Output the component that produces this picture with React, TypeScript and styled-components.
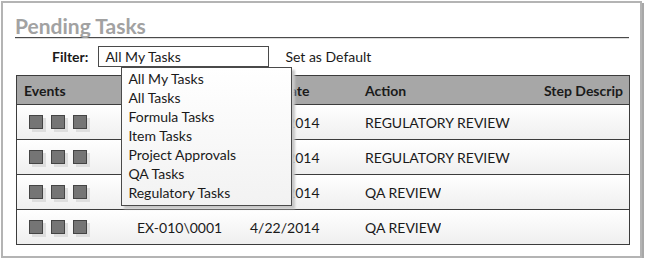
import styled, { createGlobalStyle } from "styled-components"

const GlobalStyle = createGlobalStyle`
    body {
        margin: 0;
        background: #ffffff;
        font-family: Lato, "Open Sans", sans-serif;
        color: #1a1a1a;
    }
`

const Frame = styled.div`
    box-sizing: border-box;
    position: relative;
    margin: 1px 0 0 1px;
    width: 641px;
    height: 257px;
    border: 2px solid #b4b4b4;
    box-shadow: 2px 2px 0 #a8a8a8;
    padding: 12px 11px 0 12px;
    background: #ffffff;
`

const Title = styled.h1`
    margin: 0;
    font-size: 21px;
    line-height: 21px;
    font-weight: 700;
    color: #a2a2a2;
    border-bottom: 1px solid #4a4a4a;
    box-shadow: 0 1px 0 #dcdcdc;
    padding-bottom: 1px;
`

const FilterRow = styled.div`
    display: flex;
    align-items: center;
    margin-top: 8px;
    padding-left: 37px;
    font-size: 14px;
`

const FilterLabel = styled.span`
    font-weight: 700;
`

const SelectWrap = styled.div`
    position: relative;
    margin-left: 10px;
`

const SelectBox = styled.div`
    box-sizing: border-box;
    width: 171px;
    height: 21px;
    border: 1px solid #4a4a4a;
    padding-left: 6px;
    line-height: 19px;
    background: #ffffff;
`

const DefaultLink = styled.span`
    margin-left: 16px;
`

const Dropdown = styled.div`
    position: absolute;
    z-index: 2;
    left: 23px;
    top: 21px;
    box-sizing: border-box;
    width: 171px;
    height: 139px;
    padding: 1px 0 0 6px;
    border: 1px solid #4a4a4a;
    background: linear-gradient(#ffffff, #f2f2f2);
    box-shadow: 3px 3px 2px #c8c8c8;
`

const Option = styled.div`
    font-size: 14px;
    line-height: 19px;
    white-space: nowrap;
`

const Table = styled.div`
    box-sizing: border-box;
    margin: 8px 0 0 1px;
    width: 614px;
    border: 1px solid #3c3c3c;
    font-size: 14px;
`

const Columns = `
    display: grid;
    grid-template-columns: 113px 113px 115px auto 1fr;
    align-items: center;
`

const HeaderRow = styled.div`
    ${Columns}
    height: 28px;
    background: #a7a7a7;
    font-weight: 700;
`

const Row = styled.div`
    ${Columns}
    height: 34px;
    border-top: 1px solid #3c3c3c;
    background: linear-gradient(#ffffff, #efefef);
`

const Cell = styled.div<{ $right?: boolean }>`
    padding: 0 ${(p) => (p.$right ? "6px" : "0")} 0 ${(p) => (p.$right ? "0" : "7px")};
    text-align: ${(p) => (p.$right ? "right" : "left")};
    white-space: nowrap;
    overflow: hidden;
`

const Events = styled.div`
    display: flex;
    gap: 8px;
    padding-left: 12px;
`

const EventBox = styled.span`
    box-sizing: border-box;
    width: 14px;
    height: 14px;
    background: #757575;
    border: 1px solid #444444;
    box-shadow: 3px 3px 0 #dedede;
`

const rows = [
    { id: "EX-010\\0004", date: "4/22/2014", action: "REGULATORY REVIEW" },
    { id: "EX-010\\0003", date: "4/22/2014", action: "REGULATORY REVIEW" },
    { id: "EX-010\\0002", date: "4/22/2014", action: "QA REVIEW" },
    { id: "EX-010\\0001", date: "4/22/2014", action: "QA REVIEW" },
]

const filters = [
    "All My Tasks",
    "All Tasks",
    "Formula Tasks",
    "Item Tasks",
    "Project Approvals",
    "QA Tasks",
    "Regulatory Tasks",
]

export default function App() {
    return (
        <>
            <GlobalStyle />
            <Frame>
                <Title>Pending Tasks</Title>
                <FilterRow>
                    <FilterLabel>Filter:</FilterLabel>
                    <SelectWrap>
                        <SelectBox>All My Tasks</SelectBox>
                        <Dropdown>
                            {filters.map((f) => (
                                <Option key={f}>{f}</Option>
                            ))}
                        </Dropdown>
                    </SelectWrap>
                    <DefaultLink>Set as Default</DefaultLink>
                </FilterRow>
                <Table>
                    <HeaderRow>
                        <Cell>Events</Cell>
                        <Cell>Item</Cell>
                        <Cell>Due Date</Cell>
                        <Cell>Action</Cell>
                        <Cell $right>Step Descrip</Cell>
                    </HeaderRow>
                    {rows.map((r) => (
                        <Row key={r.id}>
                            <Events>
                                <EventBox />
                                <EventBox />
                                <EventBox />
                            </Events>
                            <Cell>{r.id}</Cell>
                            <Cell>{r.date}</Cell>
                            <Cell>{r.action}</Cell>
                            <Cell />
                        </Row>
                    ))}
                </Table>
            </Frame>
        </>
    )
}
